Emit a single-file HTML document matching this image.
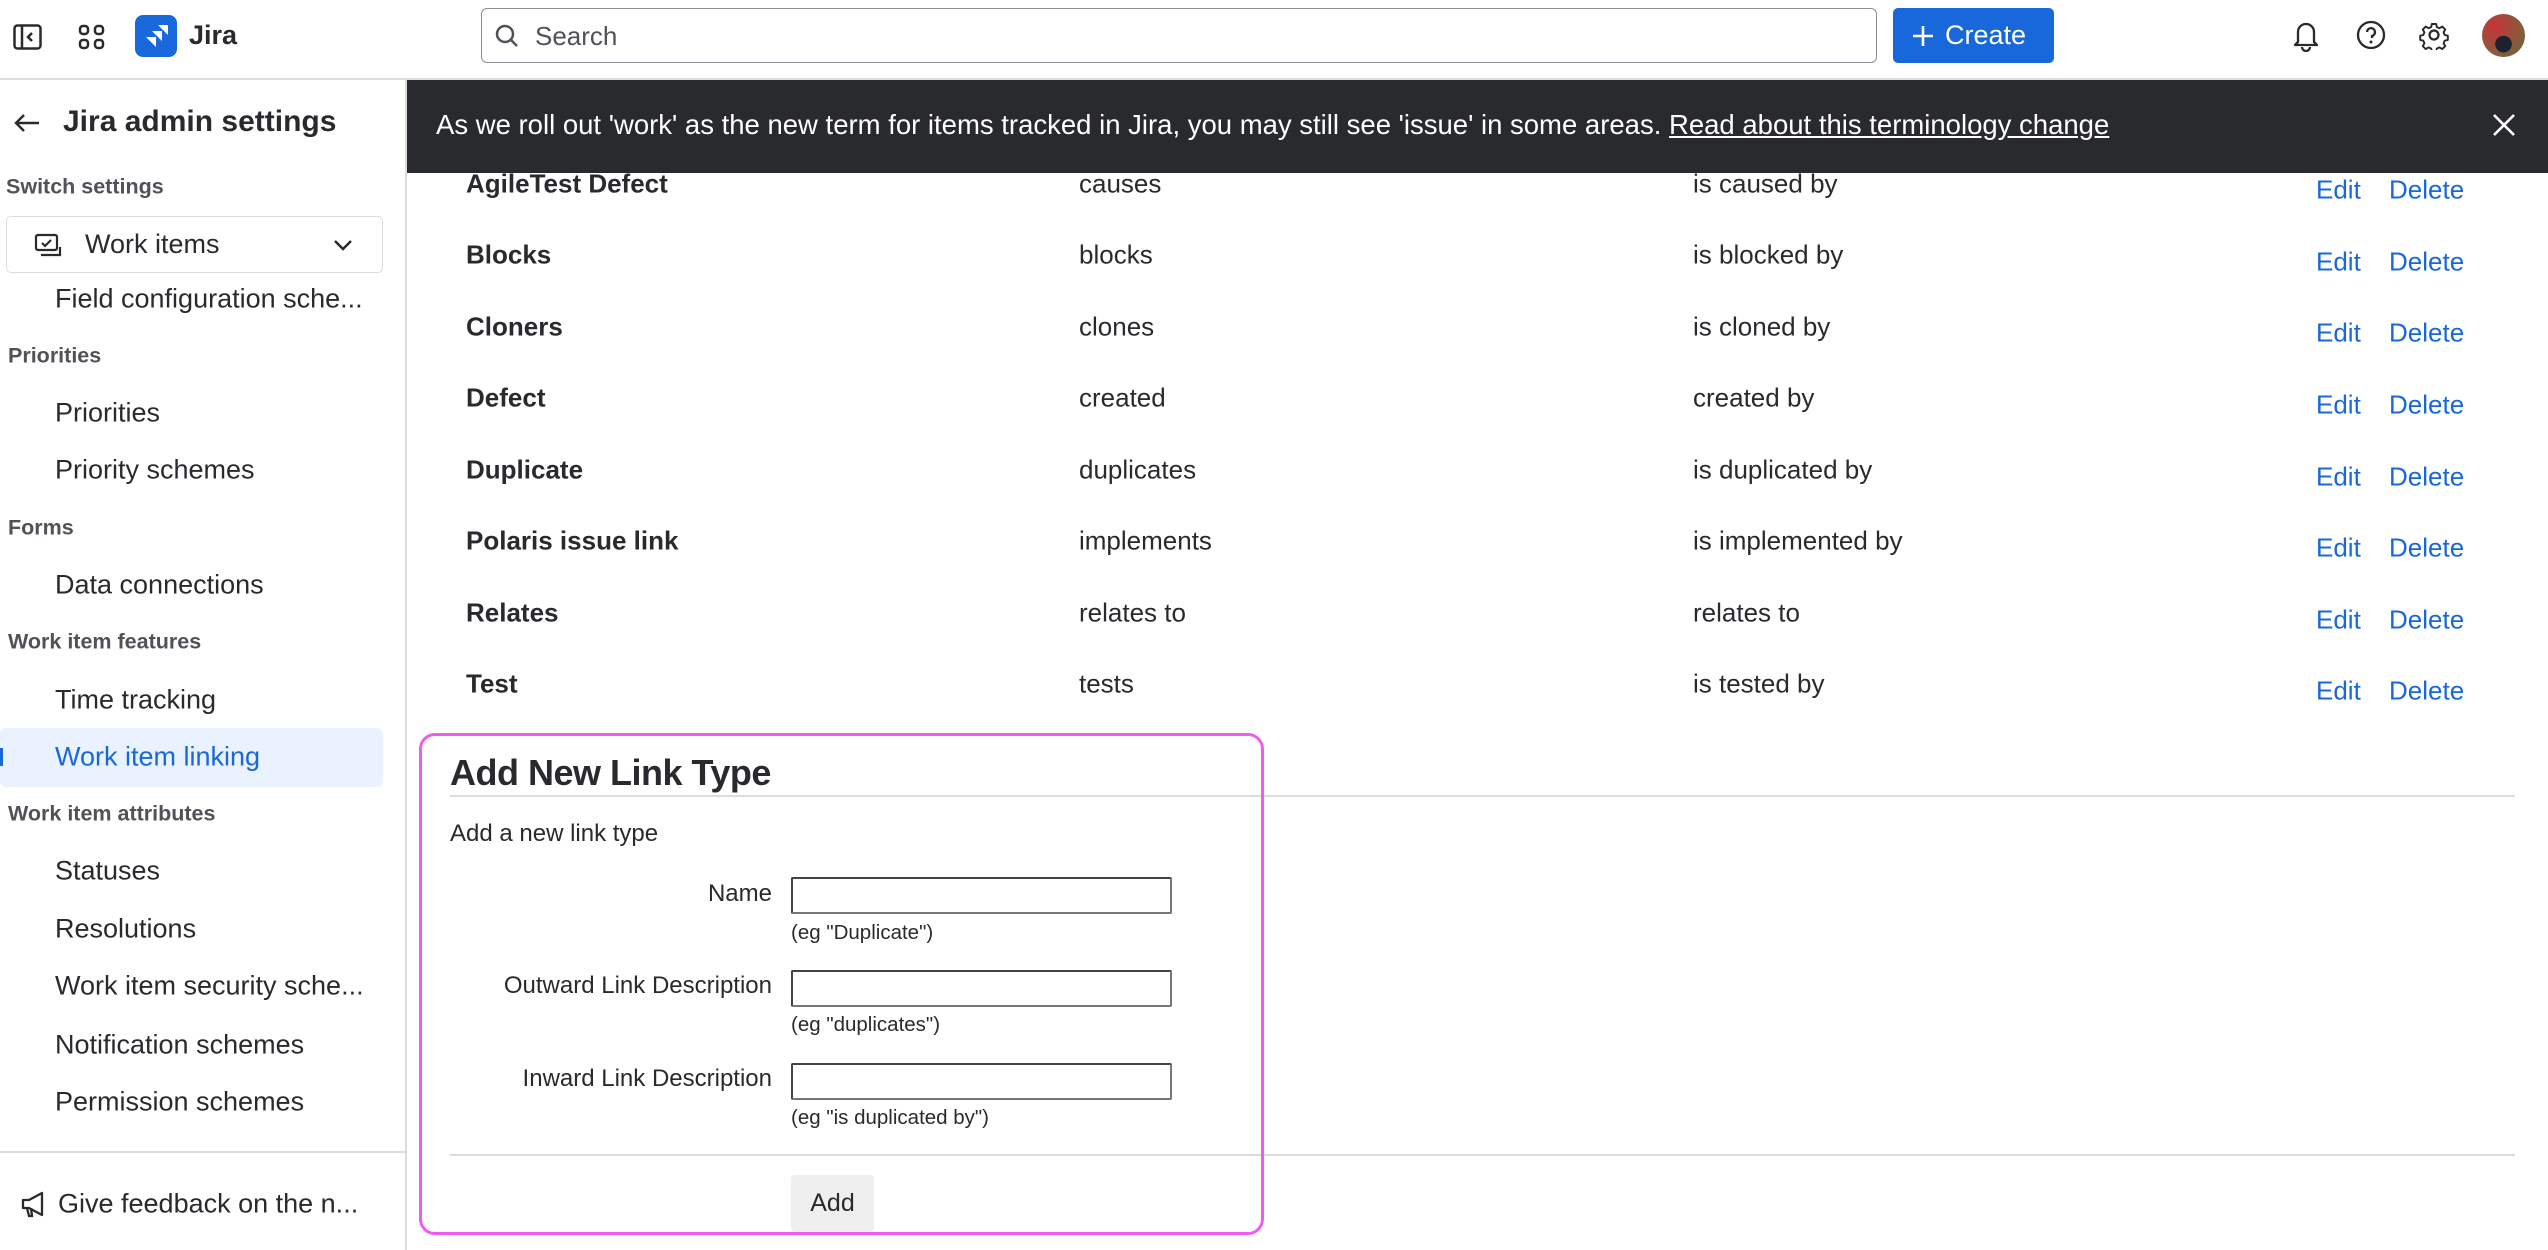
<!DOCTYPE html>
<html><head><meta charset="utf-8">
<style>
*{margin:0;padding:0;box-sizing:border-box}
body{width:2548px;height:1250px;overflow:hidden;background:#fff;font-family:"Liberation Sans",sans-serif;color:#292a2e;position:relative}
.a{position:absolute;white-space:nowrap}
.nav{font-size:27px;color:#292a2e;left:55px;transform:translateY(-50%)}
.hd{font-size:21.5px;font-weight:bold;color:#505258;left:8px;transform:translateY(-50%)}
.c{font-size:26px;transform:translateY(-50%)}
.b{font-weight:bold;left:466px}
.c2{left:1079px}.c3{left:1693px}
.lk{color:#1868db}
.lbl{font-size:24px;right:1776px;transform:translateY(-50%)}
.inp{position:absolute;left:791px;width:381px;height:37px;border:2px solid #444;border-right-color:#777;border-bottom-color:#777;border-radius:2px;background:#fff}
.hint{font-size:20.5px;left:791px;transform:translateY(-50%)}
</style></head><body>
<!-- header -->
<div class="a" style="left:0;top:78px;width:2548px;height:2px;background:#dcdcdc"></div>
<svg class="a" style="left:13px;top:24px" width="29" height="26" viewBox="0 0 29 26"><rect x="1.5" y="1.5" width="26" height="23" rx="3" fill="none" stroke="#292a2e" stroke-width="2.5"/><line x1="9" y1="2" x2="9" y2="24" stroke="#292a2e" stroke-width="2.5"/><path d="M19 9l-4 4 4 4" fill="none" stroke="#292a2e" stroke-width="2.5"/></svg>
<svg class="a" style="left:78px;top:24px" width="27" height="26" viewBox="0 0 27 26"><g fill="none" stroke="#292a2e" stroke-width="2.5"><rect x="2" y="2" width="8" height="8" rx="3"/><rect x="17" y="2" width="8" height="8" rx="3"/><rect x="2" y="16" width="8" height="8" rx="3"/><rect x="17" y="16" width="8" height="8" rx="3"/></g></svg>
<div class="a" style="left:135px;top:15px;width:42px;height:42px;border-radius:8px;background:#1868db"></div>
<svg class="a" style="left:135px;top:15px" width="42" height="42" viewBox="0 0 42 42"><path d="M11 22h10v10l-3-3zM17 16h10v10l-3-3zM23 10h10v10l-3-3z" fill="#fff"/></svg>
<div class="a" style="left:189px;top:20px;font-size:27px;font-weight:bold">Jira</div>
<div class="a" style="left:481px;top:8px;width:1396px;height:55px;border:1.5px solid #8c8f97;border-radius:6px"></div>
<svg class="a" style="left:494px;top:23px" width="26" height="26" viewBox="0 0 26 26"><circle cx="11" cy="11" r="8" fill="none" stroke="#505258" stroke-width="2.5"/><line x1="17" y1="17" x2="23" y2="23" stroke="#505258" stroke-width="2.5"/></svg>
<div class="a" style="left:535px;top:21px;font-size:26px;color:#505258">Search</div>
<div class="a" style="left:1893px;top:8px;width:161px;height:55px;background:#1868db;border-radius:5px"></div>
<svg class="a" style="left:1911px;top:24px" width="24" height="24" viewBox="0 0 24 24"><path d="M12 2v20M2 12h20" stroke="#fff" stroke-width="2.6"/></svg>
<div class="a" style="left:1945px;top:20px;font-size:27px;color:#fff">Create</div>
<svg class="a" style="left:2291px;top:18px" width="30" height="34" viewBox="0 0 30 34"><path d="M7 24V14a8 8 0 0 1 16 0v10l3 3H4z" fill="none" stroke="#292a2e" stroke-width="2.3" stroke-linejoin="round"/><path d="M11 29a4 4 0 0 0 8 0" fill="none" stroke="#292a2e" stroke-width="2.3"/></svg>
<svg class="a" style="left:2356px;top:20px" width="30" height="30" viewBox="0 0 30 30"><circle cx="15" cy="15" r="13" fill="none" stroke="#292a2e" stroke-width="2.3"/><path d="M11 12a4 4 0 1 1 5 4v2" fill="none" stroke="#292a2e" stroke-width="2.3"/><circle cx="15" cy="22" r="1.5" fill="#292a2e"/></svg>
<svg class="a" style="left:2419px;top:20px" width="30" height="30" viewBox="0 0 30 30"><g fill="none" stroke="#292a2e" stroke-width="2.2" stroke-linejoin="round"><path d="M12.6 2.5h4.8l.9 3.6 2.9 1.2 3.2-1.9 3.4 3.4-1.9 3.2 1.2 2.9 3.6.9v4.8l-3.6.9-1.2 2.9 1.9 3.2-3.4 3.4-3.2-1.9-2.9 1.2-.9 3.6h-4.8l-.9-3.6-2.9-1.2-3.2 1.9-3.4-3.4 1.9-3.2-1.2-2.9-3.6-.9v-4.8l3.6-.9 1.2-2.9-1.9-3.2 3.4-3.4 3.2 1.9 2.9-1.2z" transform="translate(15 15) scale(0.88) translate(-15 -15)"/><circle cx="15" cy="15" r="4.5"/></g></svg>
<div class="a" style="left:2482px;top:14px;width:43px;height:43px;border-radius:50%;background:radial-gradient(circle at 50% 70%,#1d2230 0 22%,transparent 23%),radial-gradient(circle at 30% 30%,#c8323a,#8a5a3a 60%,#5a6a3a)"></div>
<!-- sidebar -->
<div class="a" style="left:405px;top:80px;width:2px;height:1170px;background:#dcdcdc"></div>
<svg class="a" style="left:13px;top:112px" width="28" height="22" viewBox="0 0 28 22"><path d="M26 11H3M11 3l-8 8 8 8" fill="none" stroke="#292a2e" stroke-width="2.4"/></svg>
<div class="a" style="left:63px;top:105px;font-size:30px;font-weight:bold">Jira admin settings</div>
<div class="a hd" style="left:6px;top:187px">Switch settings</div>
<div class="a" style="left:6px;top:216px;width:377px;height:57px;border:1.5px solid #dcdcdc;border-radius:5px"></div>
<svg class="a" style="left:34px;top:233px" width="28" height="25" viewBox="0 0 28 25"><rect x="2" y="2" width="21" height="15" rx="2" fill="none" stroke="#292a2e" stroke-width="2.2"/><path d="M8 10l3 3 6-6" fill="none" stroke="#292a2e" stroke-width="2.2"/><path d="M7 22h19v-8" fill="none" stroke="#292a2e" stroke-width="2.2"/></svg>
<div class="a" style="left:85px;top:229px;font-size:27px">Work items</div>
<svg class="a" style="left:333px;top:239px" width="20" height="12" viewBox="0 0 20 12"><path d="M2 2l8 8 8-8" fill="none" stroke="#292a2e" stroke-width="2.4"/></svg>
<div class="a nav" style="top:299px">Field configuration sche...</div>
<div class="a hd" style="top:356px">Priorities</div>
<div class="a nav" style="top:413px">Priorities</div>
<div class="a nav" style="top:470px">Priority schemes</div>
<div class="a hd" style="top:528px">Forms</div>
<div class="a nav" style="top:585px">Data connections</div>
<div class="a hd" style="top:642px">Work item features</div>
<div class="a nav" style="top:700px">Time tracking</div>
<div class="a" style="left:0;top:728px;width:383px;height:59px;background:#e9f2fe;border-radius:6px"></div>
<div class="a" style="left:0;top:748px;width:3px;height:18px;background:#1868db"></div>
<div class="a nav" style="top:757px;color:#1868db">Work item linking</div>
<div class="a hd" style="top:814px">Work item attributes</div>
<div class="a nav" style="top:871px">Statuses</div>
<div class="a nav" style="top:929px">Resolutions</div>
<div class="a nav" style="top:986px">Work item security sche...</div>
<div class="a nav" style="top:1045px">Notification schemes</div>
<div class="a nav" style="top:1102px">Permission schemes</div>
<div class="a" style="left:0;top:1151px;width:405px;height:2px;background:#dcdcdc"></div>
<svg class="a" style="left:20px;top:1190px" width="28" height="28" viewBox="0 0 28 28"><path d="M3 10h6l13-7v22L9 18H3z" fill="none" stroke="#292a2e" stroke-width="2.3" stroke-linejoin="round"/><path d="M7 18l2 8h3l-1-8" fill="none" stroke="#292a2e" stroke-width="2.3"/></svg>
<div class="a nav" style="left:58px;top:1204px">Give feedback on the n...</div>
<!-- table -->
<div class="a c b" style="top:184px">AgileTest Defect</div><div class="a c c2" style="top:184px">causes</div><div class="a c c3" style="top:184px">is caused by</div>
<div class="a c b" style="top:255px">Blocks</div><div class="a c c2" style="top:255px">blocks</div><div class="a c c3" style="top:255px">is blocked by</div>
<div class="a c b" style="top:327px">Cloners</div><div class="a c c2" style="top:327px">clones</div><div class="a c c3" style="top:327px">is cloned by</div>
<div class="a c b" style="top:398px">Defect</div><div class="a c c2" style="top:398px">created</div><div class="a c c3" style="top:398px">created by</div>
<div class="a c b" style="top:470px">Duplicate</div><div class="a c c2" style="top:470px">duplicates</div><div class="a c c3" style="top:470px">is duplicated by</div>
<div class="a c b" style="top:541px">Polaris issue link</div><div class="a c c2" style="top:541px">implements</div><div class="a c c3" style="top:541px">is implemented by</div>
<div class="a c b" style="top:613px">Relates</div><div class="a c c2" style="top:613px">relates to</div><div class="a c c3" style="top:613px">relates to</div>
<div class="a c b" style="top:684px">Test</div><div class="a c c2" style="top:684px">tests</div><div class="a c c3" style="top:684px">is tested by</div>
<div class="a c lk" style="left:2316px;top:190px">Edit</div><div class="a c lk" style="left:2389px;top:190px">Delete</div>
<div class="a c lk" style="left:2316px;top:262px">Edit</div><div class="a c lk" style="left:2389px;top:262px">Delete</div>
<div class="a c lk" style="left:2316px;top:333px">Edit</div><div class="a c lk" style="left:2389px;top:333px">Delete</div>
<div class="a c lk" style="left:2316px;top:405px">Edit</div><div class="a c lk" style="left:2389px;top:405px">Delete</div>
<div class="a c lk" style="left:2316px;top:477px">Edit</div><div class="a c lk" style="left:2389px;top:477px">Delete</div>
<div class="a c lk" style="left:2316px;top:548px">Edit</div><div class="a c lk" style="left:2389px;top:548px">Delete</div>
<div class="a c lk" style="left:2316px;top:620px">Edit</div><div class="a c lk" style="left:2389px;top:620px">Delete</div>
<div class="a c lk" style="left:2316px;top:691px">Edit</div><div class="a c lk" style="left:2389px;top:691px">Delete</div>
<!-- banner -->
<div class="a" style="left:407px;top:80px;width:2141px;height:93px;background:#292a2e"></div>
<div class="a" style="left:436px;top:109px;font-size:27.5px;color:#fff">As we roll out 'work' as the new term for items tracked in Jira, you may still see 'issue' in some areas. <span style="text-decoration:underline">Read about this terminology change</span></div>
<svg class="a" style="left:2492px;top:113px" width="24" height="24" viewBox="0 0 24 24"><path d="M2 2l20 20M22 2L2 22" stroke="#fff" stroke-width="2.6"/></svg>
<!-- form -->
<div class="a" style="left:450px;top:795px;width:2065px;height:2px;background:#dcdcdc"></div>
<div class="a" style="left:450px;top:1154px;width:2065px;height:2px;background:#dcdcdc"></div>
<div class="a" style="left:450px;top:752px;font-size:36px;font-weight:bold;letter-spacing:-0.5px">Add New Link Type</div>
<div class="a" style="left:450px;top:820px;font-size:24px">Add a new link type</div>
<div class="a lbl" style="top:894px">Name</div>
<div class="inp" style="top:877px"></div>
<div class="a hint" style="top:933px">(eg "Duplicate")</div>
<div class="a lbl" style="top:986px">Outward Link Description</div>
<div class="inp" style="top:970px"></div>
<div class="a hint" style="top:1025px">(eg "duplicates")</div>
<div class="a lbl" style="top:1079px">Inward Link Description</div>
<div class="inp" style="top:1063px"></div>
<div class="a hint" style="top:1118px">(eg "is duplicated by")</div>
<div class="a" style="left:791px;top:1175px;width:83px;height:57px;background:#efefef;border-radius:4px;font-size:25px;text-align:center;line-height:57px">Add</div>
<div class="a" style="left:419px;top:733px;width:845px;height:502px;border:3px solid #ee5cf0;border-radius:16px"></div>
</body></html>
